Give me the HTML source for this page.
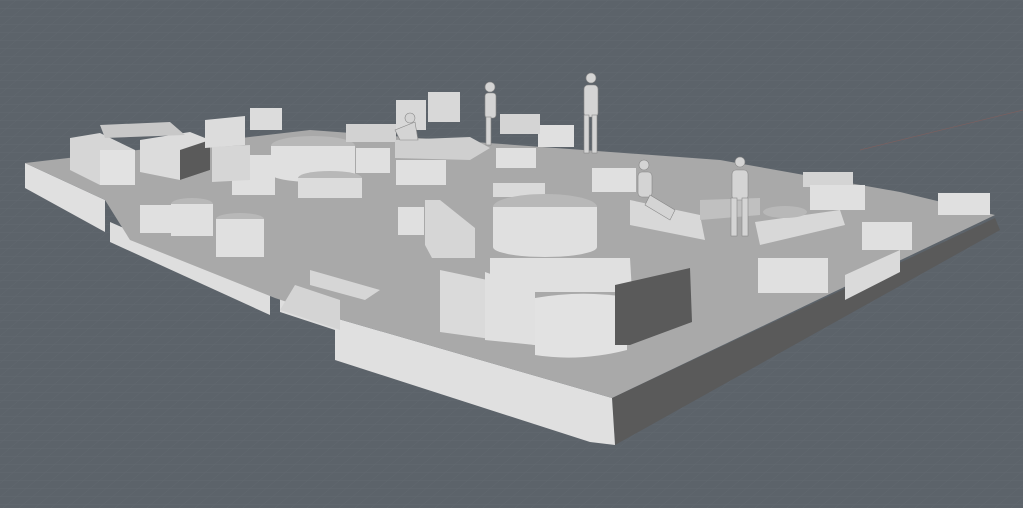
<!DOCTYPE html>
<html><head><style>html,body{margin:0;padding:0;background:#5d646b;width:1023px;height:508px;overflow:hidden}</style></head><body>
<svg width="1023" height="508" viewBox="0 0 1023 508" xmlns="http://www.w3.org/2000/svg">
<defs><pattern id="g" width="16" height="8" patternUnits="userSpaceOnUse" patternTransform="skewX(-50)"><path d="M0 0H16M0 0V8" stroke="#656c73" stroke-width="1" fill="none"/></pattern></defs>
<rect width="1023" height="508" fill="#5c636a"/>
<rect width="1023" height="508" fill="url(#g)" opacity="0.7"/>
<line x1="860" y1="150" x2="1023" y2="110" stroke="#7a6060" stroke-width="0.7"/>
<polygon points="612,398 995,218 1000,230 615,445" fill="#5a5a5a"/>
<polygon points="335,318 612,398 615,445 590,442 335,360" fill="#e0e0e0"/>
<polygon points="25,163 105,200 105,232 25,188" fill="#e0e0e0"/>
<polygon points="110,222 270,292 270,315 110,242" fill="#dedede"/>
<polygon points="280,298 335,318 335,330 280,312" fill="#dedede"/>
<polygon points="25,163 310,130 720,160 900,192 995,215 612,398 335,318 275,298 130,240 105,200" fill="#a9a9a9"/>
<g>
<polygon points="70,138 100,133 135,150 135,185 100,185 70,170" fill="#d6d6d6"/>
<polygon points="100,150 135,150 135,185 100,185" fill="#e2e2e2"/>
<polygon points="140,140 190,132 210,140 210,170 180,180 140,172" fill="#dcdcdc"/>
<polygon points="180,150 210,140 210,170 180,180" fill="#5a5a5a"/>
<polygon points="100,125 170,122 185,135 105,138" fill="#c8c8c8"/>
<polygon points="205,120 245,116 245,145 205,148" fill="#dcdcdc"/>
<polygon points="250,108 282,108 282,130 250,130" fill="#dcdcdc"/>
<polygon points="232,155 275,155 275,195 232,195" fill="#e0e0e0"/>
<polygon points="212,147 250,145 250,180 212,182" fill="#d6d6d6"/>
<ellipse cx="313" cy="146" rx="42" ry="10" fill="#b8b8b8"/>
<rect x="271" y="146" width="84" height="28" fill="#e0e0e0"/>
<ellipse cx="313" cy="174" rx="42" ry="8" fill="#e0e0e0"/>
<ellipse cx="330" cy="178" rx="32" ry="7" fill="#b8b8b8"/>
<rect x="298" y="178" width="64" height="20" fill="#dcdcdc"/>
<rect x="356" y="148" width="34" height="25" fill="#e0e0e0"/>
<rect x="346" y="124" width="50" height="18" fill="#d2d2d2"/>
<rect x="396" y="100" width="30" height="30" fill="#d8d8d8"/>
<rect x="428" y="92" width="32" height="30" fill="#d8d8d8"/>
<polygon points="395,140 470,137 490,148 470,160 395,158" fill="#cfcfcf"/>
<rect x="396" y="160" width="50" height="25" fill="#e0e0e0"/>
<rect x="496" y="148" width="40" height="20" fill="#e0e0e0"/>
<rect x="538" y="125" width="36" height="22" fill="#e0e0e0"/>
<rect x="500" y="114" width="40" height="20" fill="#d4d4d4"/>
<rect x="493" y="183" width="52" height="14" fill="#dadada"/>
<rect x="592" y="168" width="44" height="24" fill="#e0e0e0"/>
<rect x="140" y="205" width="32" height="28" fill="#e0e0e0"/>
<ellipse cx="192" cy="204" rx="21" ry="6" fill="#b8b8b8"/>
<rect x="171" y="204" width="42" height="32" fill="#e0e0e0"/>
<ellipse cx="240" cy="219" rx="24" ry="6" fill="#b8b8b8"/>
<rect x="216" y="219" width="48" height="38" fill="#e0e0e0"/>
<rect x="398" y="207" width="26" height="28" fill="#e0e0e0"/>
<polygon points="425,200 440,200 475,228 475,258 432,258 425,245" fill="#d6d6d6"/>
<ellipse cx="545" cy="207" rx="52" ry="13" fill="#b8b8b8"/>
<rect x="493" y="207" width="104" height="40" fill="#e0e0e0"/>
<ellipse cx="545" cy="247" rx="52" ry="10" fill="#e0e0e0"/>
<polygon points="490,258 630,258 632,292 490,292" fill="#e0e0e0"/>
<polygon points="440,270 535,290 535,345 440,332" fill="#dadada"/>
<polygon points="485,272 535,290 535,345 485,340" fill="#e0e0e0"/>
<path d="M535 298 Q580 290 627 297 V350 Q580 362 535 355 Z" fill="#e2e2e2"/>
<polygon points="615,285 690,268 692,322 630,345 615,345" fill="#5a5a5a"/>
<polygon points="630,200 700,215 705,240 630,225" fill="#d8d8d8"/>
<polygon points="700,200 760,198 760,215 700,220" fill="#c0c0c0"/>
<polygon points="755,222 840,210 845,225 760,245" fill="#d8d8d8"/>
<ellipse cx="785" cy="212" rx="22" ry="6" fill="#b8b8b8"/>
<rect x="803" y="172" width="50" height="15" fill="#d4d4d4"/>
<rect x="810" y="185" width="55" height="25" fill="#e0e0e0"/>
<rect x="938" y="193" width="52" height="22" fill="#e0e0e0"/>
<rect x="862" y="222" width="50" height="28" fill="#e0e0e0"/>
<rect x="758" y="258" width="70" height="35" fill="#e0e0e0"/>
<polygon points="845,275 900,250 900,272 845,300" fill="#dadada"/>
<polygon points="295,285 340,300 340,330 280,310" fill="#d4d4d4"/>
<polygon points="310,270 380,290 365,300 310,285" fill="#d6d6d6"/>
</g>
<g fill="#d4d4d4" stroke="#888" stroke-width="0.6">
<circle cx="591" cy="78" r="5"/><rect x="584" y="85" width="14" height="32" rx="4"/><rect x="584" y="115" width="5" height="38"/><rect x="592" y="115" width="5" height="38"/>
<circle cx="740" cy="162" r="5"/><rect x="732" y="170" width="16" height="30" rx="4"/><rect x="731" y="198" width="6" height="38"/><rect x="742" y="198" width="6" height="38"/>
<circle cx="490" cy="87" r="5"/><rect x="485" y="93" width="11" height="25" rx="3"/><rect x="486" y="117" width="5" height="28"/>
<circle cx="644" cy="165" r="5"/><rect x="638" y="172" width="14" height="25" rx="4"/><polygon points="650,195 675,210 670,220 645,205"/>
<circle cx="410" cy="118" r="5"/><polygon points="395,130 415,122 418,140 400,140"/>
</g>
</svg>
</body></html>
